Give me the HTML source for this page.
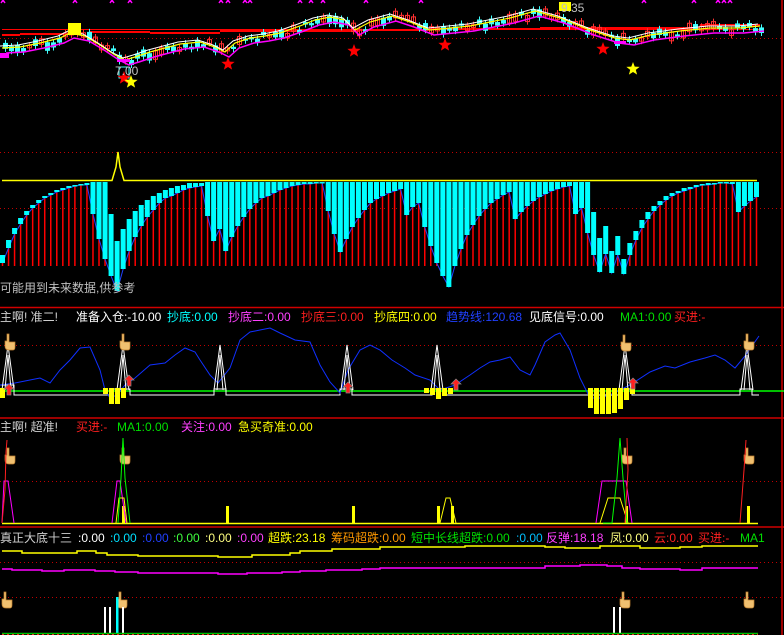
<!DOCTYPE html>
<html><head><meta charset="utf-8"><style>
html,body{margin:0;padding:0;background:#000;width:784px;height:635px;overflow:hidden}
svg{display:block}
text{font-family:"Liberation Sans","WenQuanYi Zen Hei","Noto Sans CJK SC",sans-serif;font-size:12px}
</style></head><body>
<svg id="s" width="784" height="635" viewBox="0 0 784 635" xmlns="http://www.w3.org/2000/svg">
<rect width="784" height="635" fill="#000"/>
<g stroke="#c00000" stroke-dasharray="1,3" stroke-width="1">
<line x1="0" y1="38.5" x2="784" y2="38.5"/><line x1="0" y1="95.5" x2="784" y2="95.5"/>
<line x1="0" y1="152.5" x2="784" y2="152.5"/><line x1="0" y1="208.5" x2="784" y2="208.5"/>
<line x1="0" y1="345.5" x2="784" y2="345.5"/><line x1="0" y1="481.5" x2="784" y2="481.5"/>
<line x1="0" y1="562.5" x2="784" y2="562.5"/><line x1="0" y1="597.5" x2="784" y2="597.5"/>
</g>
<g stroke="#d00000" stroke-width="1.5" fill="none">
<line x1="0" y1="307.5" x2="784" y2="307.5"/><line x1="0" y1="418" x2="784" y2="418"/>
<line x1="0" y1="527" x2="784" y2="527"/><line x1="782" y1="0" x2="782" y2="635"/>
</g>
<g id="g1"></g>
<g id="g2"></g>
<text x="0" y="292" fill="#c0c0c0">可能用到未来数据,供参考</text>
<text x="115" y="75" fill="#c0c0c0" font-size="13">7.00</text>
<text x="561" y="12" fill="#c0c0c0" font-size="13">9.35</text>
<g id="g3"></g>
<text y="321"><tspan x="0" fill="#d0d0d0">主啊! 准二!</tspan><tspan x="76" fill="#fff">准备入仓:-10.00</tspan><tspan x="167" fill="#00ffff">抄底:0.00</tspan><tspan x="228" fill="#ff40ff">抄底二:0.00</tspan><tspan x="301" fill="#ff2020">抄底三:0.00</tspan><tspan x="374" fill="#ffff00">抄底四:0.00</tspan><tspan x="446" fill="#2040ff">趋势线:120.68</tspan><tspan x="529" fill="#fff">见底信号:0.00</tspan><tspan x="620" fill="#00e000">MA1:0.00</tspan><tspan x="674" fill="#ff2020">买进:-</tspan></text>
<text y="431"><tspan x="0" fill="#d0d0d0">主啊! 超准!</tspan><tspan x="76" fill="#ff2020">买进:-</tspan><tspan x="117" fill="#00e000">MA1:0.00</tspan><tspan x="181" fill="#ff40ff">关注:0.00</tspan><tspan x="238" fill="#ffff00">急买奇准:0.00</tspan></text>
<text y="542"><tspan x="0" fill="#d0d0d0">真正大底十三</tspan><tspan x="78" fill="#fff">:0.00</tspan><tspan x="110" fill="#00e0ff">:0.00</tspan><tspan x="142" fill="#2040ff">:0.00</tspan><tspan x="173" fill="#40ff40">:0.00</tspan><tspan x="205" fill="#ffff80">:0.00</tspan><tspan x="237" fill="#ff40ff">:0.00</tspan><tspan x="268" fill="#ffff00">超跌:23.18</tspan><tspan x="331" fill="#ff9900">筹码超跌:0.00</tspan><tspan x="411" fill="#00e000">短中长线超跌:0.00</tspan><tspan x="516" fill="#00c0ff">:0.00</tspan><tspan x="546" fill="#ff40ff">反弹:18.18</tspan><tspan x="610" fill="#ffff80">凤:0.00</tspan><tspan x="654" fill="#ff2020">云:0.00</tspan><tspan x="698" fill="#ff2020">买进:-</tspan><tspan x="740" fill="#00e000">MA1</tspan></text>
</svg>
<script>
(function(){
var NS="http://www.w3.org/2000/svg";
function el(p,t,a){var e=document.createElementNS(NS,t);for(var k in a)e.setAttribute(k,a[k]);p.appendChild(e);return e;}
var g1=document.getElementById('g1'),g2=document.getElementById('g2'),g3=document.getElementById('g3');
function pts(a){return a.map(function(p){return p[0]+','+p[1]}).join(' ');}
function interp(a,x){for(var i=1;i<a.length;i++){if(x<=a[i][0]){var t=(x-a[i-1][0])/(a[i][0]-a[i-1][0]);return a[i-1][1]+t*(a[i][1]-a[i-1][1]);}}return a[a.length-1][1];}
var Y=[[2,48],[20,47],[40,43],[60,38],[70,33],[85,36],[100,45],[115,55],[125,60],[135,57],[150,52],[165,48],[180,44],[200,42],[215,47],[225,52],[235,43],[250,38],[265,36],[280,33],[300,26],[315,20],[330,17],[345,20],[355,30],[370,22],[392,16],[410,22],[430,30],[450,28],[470,26],[490,22],[510,18],[535,11],[560,18],[590,30],[615,38],[630,40],[650,35],[680,31],[710,28],[740,28],[760,26]];
[[2,35,20],[20,34,70],[90,32,150],[150,33,220],[220,31,360],[360,30,430],[430,29,540],[540,28,600],[600,28,700],[700,25,760]].forEach(function(s){el(g1,'line',{x1:s[0],y1:s[1],x2:s[2],y2:s[1],stroke:'#ff0000','stroke-width':2});});
el(g1,'line',{x1:2,y1:29.5,x2:760,y2:29.5,stroke:'#ff0000','stroke-width':1});
var seed=7;function rnd(){seed=(seed*9301+49297)%233280;return seed/233280;}
for(var cx=3;cx<760;cx+=6){var cy=interp(Y,cx);var up=rnd()>0.5;var h=2+rnd()*7;var ty=cy-3+rnd()*8-h/2;
 var c=up?'#ff3030':'#40ffff';
 el(g1,'line',{x1:cx+2.5,y1:ty-3,x2:cx+2.5,y2:ty+h+3,stroke:c,'stroke-width':1});
 if(up)el(g1,'rect',{x:cx+0.5,y:ty,width:4,height:h,fill:'none',stroke:c,'stroke-width':1});
 else el(g1,'rect',{x:cx,y:ty,width:5,height:h,fill:c});}
el(g1,'polyline',{points:pts(Y.map(function(p){return[p[0]+4,p[1]+5];})),fill:'none',stroke:'#ff00ff','stroke-width':1.5});
el(g1,'polyline',{points:pts(Y),fill:'none',stroke:'#ffff00','stroke-width':1.2});
el(g1,'polyline',{points:pts(Y.map(function(p){return[p[0]-2,p[1]-2];})),fill:'none',stroke:'#ffffff','stroke-width':1});
el(g1,'rect',{x:68,y:23,width:13,height:12,fill:'#ffff00'});
el(g1,'rect',{x:559,y:2,width:12,height:9,fill:'#ffff00'});
el(g1,'rect',{x:0,y:53,width:9,height:5,fill:'#ff00ff'});
el(g1,'rect',{x:117,y:59,width:13,height:3,fill:'#ff00ff'});
el(g1,'rect',{x:614,y:41,width:12,height:3,fill:'#ff00ff'});
el(g1,'rect',{x:119,y:67,width:10,height:11,fill:'none',stroke:'#40ffff'});
[3,75,112,130,221,228,245,250,300,311,323,366,421,644,694,718,724,730].forEach(function(x){el(g1,'path',{d:'M'+(x-2)+',3 L'+x+',0 L'+(x+2)+',3 M'+x+',0 V2',stroke:'#ff00ff','stroke-width':1.5,fill:'none'});});
function star(cx,cy,r,c){var p=[];for(var i=0;i<10;i++){var a=-Math.PI/2+i*Math.PI/5;var rr=i%2?r*0.42:r;p.push([cx+rr*Math.cos(a),cy+rr*Math.sin(a)]);}el(g1,'polygon',{points:pts(p),fill:c});}
star(124,78,7,'#ff0000');star(131,82,7,'#ffff00');star(228,64,7,'#ff0000');star(354,51,7,'#ff0000');star(445,45,7,'#ff0000');star(603,49,7,'#ff0000');star(633,69,7,'#ffff00');
el(g2,'polyline',{points:'2,180.5 112,180.5 116,167 118,152 120,167 124,180.5 757,180.5',fill:'none',stroke:'#ffff00','stroke-width':1.5});
var B=[[255,263],[240,248],[228,234],[218,224],[211,215],[205,208],[200,203],[196,198],[193,195],[190,192],[188,190],[186,188],[185,186],[184,185],[183,185],[182,214],[182,239],[182,259],[214,276],[241,291],[229,269],[219,251],[211,237],[205,226],[200,217],[196,210],[193,203],[190,198],[188,196],[186,193],[185,190],[183,188],[183,187],[183,186],
[182,216],[182,241],[182,229],[182,251],[182,237],[182,226],[182,217],[182,209],[182,203],[182,198],[182,196],[182,193],[182,190],[182,188],[182,186],[182,185],[182,184],[182,184],[182,183],[182,183],
[182,211],[182,234],[182,252],[182,239],[182,227],[182,218],[182,210],[182,203],[182,199],[182,196],[182,193],
[182,191],[182,189],[182,215],[182,207],[182,203],[182,227],[182,246],[182,263],[182,276],[182,287],[182,266],[182,249],[182,235],[182,225],[182,216],[182,209],[182,203],[182,199],[182,195],[182,192],[182,219],[182,212],[182,206],[182,201],[182,197],[182,194],[182,191],[182,189],[182,187],[182,186],[182,214],[182,208],[182,233],
[212,255],[238,272],[226,254],[251,273],[236,255],[259,274],[243,255],[231,240],[220,228],[212,219],[206,211],[201,205],[196,200],[193,196],[191,193],[188,191],[187,189],[185,187],[184,185],[183,185],[183,184],[182,183],[182,183],[182,184],
[182,212],[182,206],[182,201],[182,197]];
var n=B.length,blue=[];
for(var i=0;i<n;i++){var bx=i*754/(n-1);var b=B[i];
 if(b[1]<266)el(g2,'line',{x1:bx+2.5,y1:b[1],x2:bx+2.5,y2:266,stroke:'#ff0000','stroke-width':1.5});
 blue.push([bx+2.5,b[1]]);}
el(g2,'polyline',{points:pts(blue),fill:'none',stroke:'#2040ff','stroke-width':1});
for(var i=0;i<n;i++){var bx=i*754/(n-1);var b=B[i];el(g2,'rect',{x:bx,y:b[0],width:5,height:Math.max(1.5,b[1]-b[0]),fill:'#00ffff'});}
var T=[[0,385],[15,383],[30,380],[40,378],[50,383],[60,370],[70,360],[80,348],[90,347],[100,370],[105,390],[110,398],[117,395],[125,385],[135,378],[150,365],[165,363],[175,355],[185,348],[195,352],[200,360],[210,375],[218,383],[230,368],[240,340],[250,332],[260,330],[270,328],[280,333],[295,340],[310,342],[320,365],[330,382],[340,393],[348,370],[360,350],[370,345],[380,350],[392,360],[405,368],[415,375],[430,380],[440,390],[455,385],[470,375],[480,368],[490,362],[500,360],[510,357],[520,370],[530,375],[535,365],[545,342],[555,335],[560,333],[570,350],[580,378],[590,398],[600,398],[610,395],[620,390],[630,385],[650,372],[665,366],[675,368],[690,362],[705,358],[715,355],[725,360],[735,368],[745,356],[759,336]];
el(g3,'line',{x1:0,y1:391,x2:784,y2:391,stroke:'#00ff00','stroke-width':1.5});
el(g3,'polyline',{points:'0,385 14,385 14,395 110,395 110,389 130,389 130,395 214,395 214,389 226,389 226,395 340,395 340,389 352,389 352,395 432,395 432,389 444,389 444,395 620,395 620,389 632,389 632,395 740,395 740,389 752,389 752,395 759,395',fill:'none',stroke:'#fff','stroke-width':1});
el(g3,'polyline',{points:pts(T),fill:'none',stroke:'#1030ff','stroke-width':1});
[8,123,220,347,437,625,747].forEach(function(x){el(g3,'path',{d:'M'+(x-6)+',390 L'+x+',345 L'+(x+6)+',390 M'+(x-3)+',390 L'+x+',355 L'+(x+3)+',390',fill:'none',stroke:'#fff','stroke-width':1});});
[[0,388,5,10],[103,388,5,6],[109,388,5,16],[115,388,5,16],[121,388,5,10],[424,388,5,5],[430,388,5,7],[436,388,5,11],[442,388,5,8],[448,388,5,6],[588,388,5,20],[594,388,5,26],[600,388,5,26],[606,388,5,26],[612,388,5,25],[618,388,5,21],[624,388,5,12],[630,388,5,6]].forEach(function(r){el(g3,'rect',{x:r[0],y:r[1],width:r[2],height:r[3],fill:'#ffff00'});});
function arrow(x,y){el(g3,'path',{d:'M'+x+','+(y-6)+' l5,5 h-3 v6 h-4 v-6 h-3z',fill:'#ff2020',stroke:'#888','stroke-width':0.7});}
[[9,390],[129,381],[348,388],[456,385],[633,384]].forEach(function(a){arrow(a[0],a[1]);});
function hand(x,y){el(g3,'path',{d:'M'+(x-1)+','+(y-8)+' v7 h-2 v5 q0,4 4,4 h4 q2,0 2,-3 v-5 h-6 v-8z',fill:'#f0c070',stroke:'#c08030','stroke-width':0.7});}
[[8,342],[123,342],[624,343],[747,342],[8,456],[123,456],[625,456],[747,456],[5,600],[120,600],[623,600],[747,600]].forEach(function(h){hand(h[0],h[1]);});
el(g3,'line',{x1:2,y1:523.5,x2:758,y2:523.5,stroke:'#ffff00','stroke-width':1.5});
[123,227,353,438,452,626,748].forEach(function(x){el(g3,'rect',{x:x-1,y:506,width:3,height:17,fill:'#ffff00'});});
el(g3,'polyline',{points:'2,523 4,481 8,481 14,523',fill:'none',stroke:'#ff00ff'});
el(g3,'polyline',{points:'2,523 5,490 6,452 7,440',fill:'none',stroke:'#ff2020'});
el(g3,'polyline',{points:'112,523 117,481 120,481 126,523',fill:'none',stroke:'#ff00ff'});
el(g3,'polyline',{points:'116,523 119,498 124,498 127,523',fill:'none',stroke:'#ffff00'});
el(g3,'polyline',{points:'118,523 121,478 123,438 125,478 130,523',fill:'none',stroke:'#00ff00'});
el(g3,'polyline',{points:'440,523 446,498 450,498 456,523',fill:'none',stroke:'#ffff00'});
el(g3,'polyline',{points:'596,523 602,481 626,481 632,523',fill:'none',stroke:'#ff00ff'});
el(g3,'polyline',{points:'600,523 608,498 620,498 628,523',fill:'none',stroke:'#ffff00'});
el(g3,'polyline',{points:'603,523 612,523 617,478 620,438 623,478 627,523',fill:'none',stroke:'#00ff00'});
el(g3,'polyline',{points:'625,523 628,470 627,438',fill:'none',stroke:'#ff2020'});
el(g3,'polyline',{points:'740,523 744,470 746,440',fill:'none',stroke:'#ff2020'});
el(g3,'polyline',{points:'2,551 22,551 22,553 77,553 77,551 96,551 96,553 107,553 107,555 138,555 138,556 218,556 218,557 252,557 252,555 290,555 290,553 300,553 300,551 332,551 332,549 380,549 380,547 465,547 465,546 545,546 545,547 565,547 565,548 600,548 600,546 640,546 640,548 680,548 680,547 702,547 702,546 758,546',fill:'none',stroke:'#ffff00','stroke-width':1.5});
el(g3,'polyline',{points:'2,569 12,569 12,570 42,570 42,571 64,571 64,570 95,570 95,571 115,571 115,572 138,572 138,573 218,573 218,574 247,574 247,573 282,573 282,572 300,572 300,571 326,571 326,570 362,570 362,569 380,569 380,568 545,568 545,566 580,566 580,565 607,565 607,566 622,566 622,568 640,568 640,569 680,569 680,570 702,570 702,568 758,568',fill:'none',stroke:'#ff00ff','stroke-width':1.5});
[105,110,123,614,620].forEach(function(x){el(g3,'rect',{x:x-1,y:607,width:2,height:26,fill:'#fff'});});
el(g3,'rect',{x:116,y:597,width:2.5,height:36,fill:'#00ffff'});
el(g3,'line',{x1:2,y1:633.5,x2:758,y2:633.5,stroke:'#00c000','stroke-width':1.5});
el(g3,'line',{x1:2,y1:634.5,x2:758,y2:634.5,stroke:'#ff2020','stroke-width':1,'stroke-dasharray':'2,3'});
})();
</script>
</body></html>
